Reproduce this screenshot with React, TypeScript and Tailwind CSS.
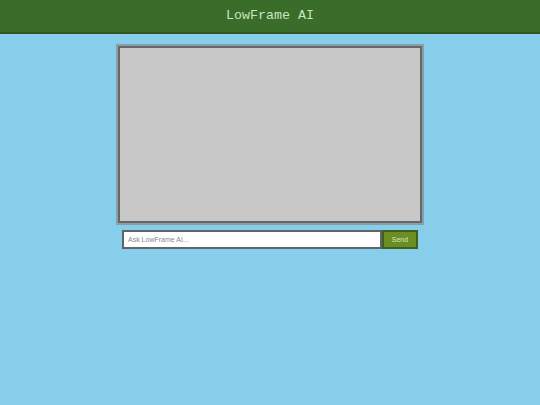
export default function App() {
  return (
    <div className="min-h-[405px] bg-[#87ceeb] font-['Liberation_Sans',Arial,sans-serif]">
      <header className="h-[34px] bg-[#3a6d2a] border-b-2 border-[#2e5522] flex items-center justify-center">
        <h1 className="font-['Liberation_Mono','Courier_New',monospace] text-[13.3px] text-[#c9e6c1] font-normal leading-none">
          LowFrame AI
        </h1>
      </header>

      <main className="flex flex-col items-center pt-[12px]">
        <div className="w-[304px] h-[177px] bg-[#c8c8c8] border-2 border-[#666666] shadow-[0_0_0_2px_#8a9ea9]" />

        <form className="flex mt-[7px] w-[296px]" onSubmit={(e) => e.preventDefault()}>
          <input
            type="text"
            placeholder="Ask LowFrame AI..."
            className="w-[260px] h-[19px] bg-white border-2 border-[#5e6468] px-[4px] text-[7px] text-[#333] placeholder:text-[#888] outline-none"
          />
          <button
            type="submit"
            className="w-[36px] h-[19px] bg-[#6b8e23] border-2 border-[#3f5f1c] text-[7px] text-[#d4e8c4] leading-none"
          >
            Send
          </button>
        </form>
      </main>
    </div>
  );
}
